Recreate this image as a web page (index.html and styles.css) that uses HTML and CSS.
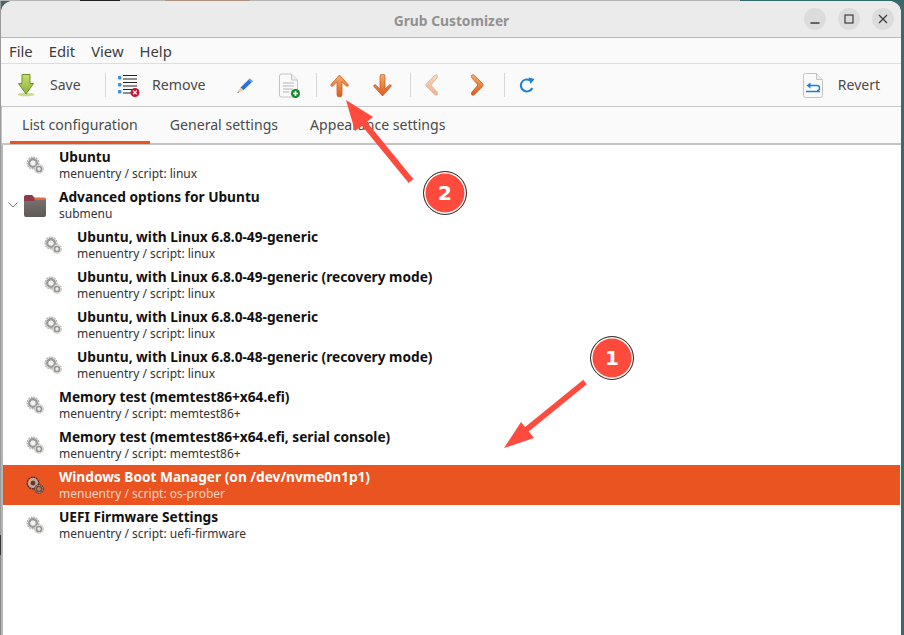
FILE: index.html
```html
<!DOCTYPE html>
<html lang="en">
<head>
<meta charset="utf-8">
<title>Grub Customizer</title>
<link rel="stylesheet" href="styles.css">
</head>
<body>
<svg class="sprite" aria-hidden="true">
  <defs>
    <linearGradient id="orange" x1="0" y1="0" x2="0" y2="1">
      <stop offset="0" stop-color="#f6ae6c"/><stop offset="1" stop-color="#dd5a1c"/>
    </linearGradient>
    <linearGradient id="green" x1="0" y1="0" x2="0" y2="1">
      <stop offset="0" stop-color="#c5dc70"/><stop offset="1" stop-color="#8cb33a"/>
    </linearGradient>
    <linearGradient id="folder" x1="0" y1="0" x2="0" y2="1">
      <stop offset="0" stop-color="#77706c"/><stop offset="1" stop-color="#5f5957"/>
    </linearGradient>
    <symbol id="gears" viewBox="0 0 20 20">
      <circle cx="7" cy="8" r="5.800" fill="none" stroke="#b4b4b1" stroke-width="1.400" stroke-dasharray="2 .7"/>
      <circle cx="7" cy="8" r="3.800" fill="none" stroke="#999996" stroke-width="2.400"/>
      <circle cx="7" cy="8" r="2.200" fill="#f2f2ef"/>
      <circle cx="13" cy="14" r="4.200" fill="#fff" stroke="#b4b4b1" stroke-width="1.100" stroke-dasharray="1.600 .6"/>
      <circle cx="13" cy="14" r="2.500" fill="none" stroke="#939390" stroke-width="1.700"/>
      <circle cx="13" cy="14" r="1.100" fill="#e6e6e3"/>
    </symbol>
    <symbol id="gears-sel" viewBox="0 0 20 20">
      <circle cx="7" cy="8" r="5.800" fill="none" stroke="#4a3028" stroke-width="1.300" stroke-dasharray="2 .7"/>
      <circle cx="7" cy="8" r="3.800" fill="none" stroke="#b9aca6" stroke-width="2.400"/>
      <circle cx="7" cy="8" r="2.200" fill="#5e3a2c"/>
      <circle cx="13" cy="14" r="4.200" fill="#c2a79b" stroke="#4a3028" stroke-width="1.100" stroke-dasharray="1.600 .6"/>
      <circle cx="13" cy="14" r="2.500" fill="none" stroke="#6c4a3c" stroke-width="1.500"/>
      <circle cx="13" cy="14" r="1.100" fill="#e8622e"/>
    </symbol>
  </defs>
</svg>

<div class="window">
  <header class="titlebar">
    <span class="title">Grub Customizer</span>
    <div class="controls">
      <span class="ctl"><svg width="10" height="10" viewBox="0 0 10 10"><path d="M.5 9h9" stroke="#3d3d3d" stroke-width="1.3"/></svg></span>
      <span class="ctl"><svg width="10" height="10" viewBox="0 0 10 10"><rect x="1" y="1" width="8" height="8" fill="none" stroke="#3d3d3d" stroke-width="1.2"/></svg></span>
      <span class="ctl"><svg width="10" height="10" viewBox="0 0 10 10"><path d="M1 1l8 8M9 1l-8 8" stroke="#3d3d3d" stroke-width="1.3"/></svg></span>
    </div>
  </header>

  <nav class="menubar">
    <span class="menu">File</span><span class="menu">Edit</span><span class="menu">View</span><span class="menu">Help</span>
  </nav>

  <div class="toolbar">
    <div class="tool tool-save">
      <svg class="ic" width="18" height="24" viewBox="0 0 18 24">
        <ellipse cx="9" cy="21.5" rx="8.5" ry="1.8" fill="#c9dc8a"/>
        <path d="M5 1.5h8v9h3.5L9 21 1.5 10.5H5z" fill="url(#green)" stroke="#6f8f2a" stroke-width="1"/>
      </svg>
      <span class="label">Save</span>
    </div>
    <span class="sep"></span>
    <div class="tool tool-remove">
      <svg class="ic" width="23" height="24" viewBox="0 0 23 24">
        <g fill="#3b8fdc"><rect x="1" y="3" width="3.4" height="3.4" rx=".8"/><rect x="1" y="10" width="3.4" height="3.4" rx=".8"/><rect x="1" y="17" width="3.4" height="3.4" rx=".8"/></g>
        <path d="M6 2.5h14M6 6h14M6 9.500h14M6 13h14M6 16.500h12M6 20h8" stroke="#222" stroke-width="1.1"/>
        <circle cx="18" cy="19.500" r="4.500" fill="#c8152f"/>
        <path d="M16.200 17.700l3.600 3.600M19.800 17.700l-3.600 3.600" stroke="#fff" stroke-width="1.300"/>
      </svg>
      <span class="label">Remove</span>
    </div>
    <div class="icon-btn">
      <svg width="18" height="18" viewBox="0 0 18 18">
        <path d="M4.500 11.500L13.800 2.500l3 2.800-9.400 9z" fill="#2f6fd6"/>
        <path d="M13.800 2.500l3 2.800-1.300 1.300-3-2.800z" fill="#6ea5ec"/>
        <path d="M4.500 11.500l2.900 2.800L1 17z" fill="#e9c9a0"/>
        <path d="M2.600 15.500L1 17l2.200-.7z" fill="#444"/>
      </svg>
    </div>
    <div class="icon-btn">
      <svg width="22" height="25" viewBox="0 0 22 25">
        <path d="M1.500 3a2 2 0 0 1 2-2h10l6 6v15a2 2 0 0 1-2 2h-14a2 2 0 0 1-2-2z" fill="#fafafa" stroke="#c4c4c4"/>
        <path d="M13.500 1v6h6" fill="#eee" stroke="#c4c4c4"/>
        <path d="M5 10h11M5 13h11M5 16h10M5 19h6" stroke="#b5b5b5" stroke-width="1"/>
        <circle cx="17.500" cy="20.500" r="4.500" fill="#16862f"/>
        <path d="M15 20.500h5M17.500 18v5" stroke="#fff" stroke-width="1.600"/>
      </svg>
    </div>
    <span class="sep"></span>
    <div class="icon-btn">
      <svg width="19" height="23" viewBox="0 0 19 23">
        <path d="M9.500 1L18 10.500c.6.800 0 1.800-1 1.800-.4 0-.8-.2-1-.5L12 7.800V20.500a2 2 0 0 1-5 0V7.800L3 11.800c-.3.300-.6.500-1 .5-1 0-1.600-1-1-1.800z" fill="url(#orange)" stroke="#cf5b1e" stroke-width=".8"/>
      </svg>
    </div>
    <div class="icon-btn icon-down">
      <svg width="19" height="23" viewBox="0 0 19 23">
        <path d="M9.500 22L18 12.500c.6-.8 0-1.800-1-1.800-.4 0-.8.200-1 .5L12 15.200V2.500a2.500 2.500 0 0 0-5 0v12.700L3 11.200c-.3-.3-.6-.5-1-.5-1 0-1.600 1-1 1.800z" fill="url(#orange)" stroke="#cf5b1e" stroke-width=".8"/>
      </svg>
    </div>
    <span class="sep"></span>
    <div class="icon-btn icon-left">
      <svg class="faded" width="13" height="22" viewBox="0 0 13 22">
        <path d="M9.800 1.200L1.500 9.500c-.9.900-.9 2.100 0 3l8.300 8.300c2 1.500 3.800-.8 2.500-2.500L6 11l6.300-7.300c1.300-1.700-.5-4-2.500-2.500z" fill="url(#orange)" stroke="#cf5b1e" stroke-width=".8"/>
      </svg>
    </div>
    <div class="icon-btn">
      <svg width="13" height="22" viewBox="0 0 13 22">
        <path d="M3.200 1.200l8.300 8.300c.9.900.9 2.100 0 3l-8.300 8.300c-2 1.500-3.800-.8-2.500-2.500L7 11 .7 3.700C-.6 2 1.200-.3 3.200 1.200z" fill="url(#orange)" stroke="#cf5b1e" stroke-width=".8"/>
      </svg>
    </div>
    <span class="sep"></span>
    <div class="icon-btn">
      <svg width="16" height="16" viewBox="0 0 16 16">
        <path d="M13.300 11A6 6 0 1 1 11 3.300" fill="none" stroke="#1c7fd8" stroke-width="2"/>
        <path d="M9.500 0.500L15.500 2 11.500 7z" fill="#1c7fd8"/>
      </svg>
    </div>
    <div class="tool tool-revert">
      <svg class="ic" width="20" height="25" viewBox="0 0 20 25">
        <path d="M.5 2.500a2 2 0 0 1 2-2h11l6 6v16a2 2 0 0 1-2 2h-15a2 2 0 0 1-2-2z" fill="#fafafa" stroke="#c4c4c4"/>
        <path d="M13.500.5v6h6" fill="#eee" stroke="#c4c4c4"/>
        <path d="M7 12.500h7a2.600 2.600 0 0 1 0 5.200" fill="none" stroke="#1c7fd8" stroke-width="1.300"/>
        <path d="M7.500 9.500v6L3.500 12.500z" fill="#1c7fd8"/>
        <path d="M3 18.500h14" stroke="#1c7fd8" stroke-width="1.300"/>
      </svg>
      <span class="label">Revert</span>
    </div>
  </div>

  <div class="tabs">
    <span class="tab tab-active">List configuration</span>
    <span class="tab">General settings</span>
    <span class="tab">Appearance settings</span>
  </div>

  <main class="list">
    <div class="row"><svg class="gear"><use href="#gears"/></svg><div class="txt"><div class="name">Ubuntu</div><div class="sub">menuentry / script: linux</div></div></div>
    <div class="row row-folder">
      <svg class="expander" width="10" height="6" viewBox="0 0 10 6"><path d="M.5.500L5 5 9.500.500" fill="none" stroke="#777" stroke-width="1"/></svg>
      <svg class="folder" width="24" height="23" viewBox="0 0 24 23">
        <path d="M1 3a2 2 0 0 1 2-2h6l3 3h9a2 2 0 0 1 2 2v3H1z" fill="#8c3a4c"/>
        <path d="M11 3.500h10a2 2 0 0 1 2 2V7H12z" fill="#d9703a"/>
        <path d="M1 8a1 1 0 0 1 1-1h9l1.500-1H22a1 1 0 0 1 1 1v14a2 2 0 0 1-2 2H3a2 2 0 0 1-2-2z" fill="url(#folder)"/>
      </svg>
      <div class="txt"><div class="name">Advanced options for Ubuntu</div><div class="sub">submenu</div></div>
    </div>
    <div class="row row-child"><svg class="gear"><use href="#gears"/></svg><div class="txt"><div class="name">Ubuntu, with Linux 6.8.0-49-generic</div><div class="sub">menuentry / script: linux</div></div></div>
    <div class="row row-child"><svg class="gear"><use href="#gears"/></svg><div class="txt"><div class="name">Ubuntu, with Linux 6.8.0-49-generic (recovery mode)</div><div class="sub">menuentry / script: linux</div></div></div>
    <div class="row row-child"><svg class="gear"><use href="#gears"/></svg><div class="txt"><div class="name">Ubuntu, with Linux 6.8.0-48-generic</div><div class="sub">menuentry / script: linux</div></div></div>
    <div class="row row-child"><svg class="gear"><use href="#gears"/></svg><div class="txt"><div class="name">Ubuntu, with Linux 6.8.0-48-generic (recovery mode)</div><div class="sub">menuentry / script: linux</div></div></div>
    <div class="row"><svg class="gear"><use href="#gears"/></svg><div class="txt"><div class="name">Memory test (memtest86+x64.efi)</div><div class="sub">menuentry / script: memtest86+</div></div></div>
    <div class="row"><svg class="gear"><use href="#gears"/></svg><div class="txt"><div class="name">Memory test (memtest86+x64.efi, serial console)</div><div class="sub">menuentry / script: memtest86+</div></div></div>
    <div class="row row-selected"><svg class="gear"><use href="#gears-sel"/></svg><div class="txt"><div class="name">Windows Boot Manager (on /dev/nvme0n1p1)</div><div class="sub">menuentry / script: os-prober</div></div></div>
    <div class="row"><svg class="gear"><use href="#gears"/></svg><div class="txt"><div class="name">UEFI Firmware Settings</div><div class="sub">menuentry / script: uefi-firmware</div></div></div>
  </main>
</div>

<svg class="arrows" width="904" height="635" viewBox="0 0 904 635" aria-hidden="true">
  <path d="M411 181L362 121" stroke="#ff4b3e" stroke-width="6"/>
  <path d="M346 100l27 17-18 14z" fill="#ff4b3e"/>
  <path d="M585 382L526 430" stroke="#ff4b3e" stroke-width="5.500"/>
  <path d="M504 448l17-26 13 16z" fill="#ff4b3e"/>
</svg>
<span class="badge badge-one">1</span>
<span class="badge badge-two">2</span>
</body>
</html>
```
FILE: styles.css
```css
* { box-sizing: border-box; }

html, body { margin: 0; height: 100%; }

body {
  height: 635px;
  overflow: hidden;
  position: relative;
  display: flex;
  padding: 1px 3px 0 1px;
  font-family: "Noto Sans", sans-serif;
  background:
    linear-gradient(90deg, #b5b5b5 0 80px, #222 80px 120px, #b5b5b5 120px 165px, #b09080 165px 250px, #b5b5b5 250px 740px, #2f6a6e 740px) top / 100% 1px no-repeat,
    linear-gradient(180deg, #9a9a9a 0 535px, #333 535px 555px, #8a8a8a 555px) left / 1px 100% no-repeat,
    #3c6a6a;
}

.sprite { position: absolute; width: 0; height: 0; }

.window {
  flex: 1;
  min-width: 0;
  display: flex;
  flex-direction: column;
  background: #fafafa;
  border-radius: 12px 12px 0 0;
  overflow: hidden;
}

.titlebar {
  flex: 0 0 37px;
  display: flex;
  align-items: center;
  justify-content: center;
  position: relative;
  background: #ebebeb;
  border-bottom: 1px solid #b8b8b8;
}

.title {
  font-size: 13.8px;
  font-weight: 700;
  color: #919191;
  margin-top: 2px;
  margin-left: 1px;
}

.controls {
  position: absolute;
  right: 7px;
  top: 7px;
  display: flex;
  gap: 12px;
}

.ctl {
  width: 22px;
  height: 22px;
  border-radius: 50%;
  background: #dcdcdc;
  display: flex;
  align-items: center;
  justify-content: center;
}

.menubar {
  flex: 0 0 26px;
  display: flex;
  align-items: center;
  padding-left: 8px;
  gap: 16px;
  font-size: 14.8px;
  color: #3d3d3d;
  border-bottom: 1px solid #dedede;
}

.toolbar {
  flex: 0 0 43px;
  display: flex;
  align-items: center;
  border-bottom: 1px solid #c6c6c6;
  font-size: 14px;
  color: #4a4a4a;
}

.label { margin-bottom: 2px; }

.tool { display: flex; align-items: center; }
.tool-save { width: 99px; padding-left: 16px; gap: 15px; }
.tool-remove { width: 117px; padding-left: 11px; gap: 12px; font-size: 14.2px; }
.tool-revert { margin-left: auto; padding-right: 21px; gap: 15px; }
.tool-revert .ic { margin-left: 0; }

.sep { width: 1px; height: 24px; margin-left: 5px; background: #d6d6d6; }

.icon-btn {
  width: 44px;
  display: flex;
  align-items: center;
  justify-content: center;
}

.icon-down { padding-right: 2px; }
.icon-left { padding-right: 4px; }

.ic { flex: none; }
.faded { opacity: .45; }

.tabs {
  flex: 0 0 38px;
  display: flex;
  gap: 8px;
  padding-left: 8px;
  border-left: 1px solid #c6c6c6;
  border-bottom: 2px solid #c4c4c4;
  font-size: 14.1px;
  color: #4a4a4a;
}

.tab {
  padding: 0 12px;
  display: flex;
  align-items: center;
  border-bottom: 2px solid transparent;
  margin-bottom: -1px;
}

.tab-active { border-bottom: 3px solid #e95420; padding-top: 1px; }

.list {
  flex: 1;
  background: #fff;
  border-left: 2px solid #b5b5b5;
  margin-right: 1px;
  padding-top: 0;
}

.row {
  height: 40px;
  display: flex;
  align-items: center;
  padding-left: 23px;
}

.row-child { padding-left: 41px; }
.row-folder { padding-left: 5px; }

.gear { width: 20px; height: 20px; margin-right: 13px; flex: none; }
.expander { margin-right: 5px; flex: none; }
.folder { margin-right: 12px; flex: none; }

.txt { line-height: 16px; padding-top: 1px; }
.name { font-size: 13.7px; font-weight: 700; color: #111; }
.sub { font-size: 12px; color: #333; margin-top: 1px; }

.row-selected { background: #e95420; }
.row-selected .name { color: #fff; }
.row-selected .sub { color: #f5d5c8; }

.arrows { position: absolute; left: 0; top: 0; pointer-events: none; }

.badge {
  position: absolute;
  width: 44px;
  height: 44px;
  border-radius: 50%;
  background: #ff4b3e;
  border: 1px solid #333;
  box-shadow: inset 0 0 0 1.5px #fff;
  color: #fff;
  font-family: "DejaVu Sans", sans-serif;
  font-weight: 700;
  font-size: 20px;
  display: flex;
  align-items: center;
  justify-content: center;
}

.badge-one { left: 590px; top: 336px; }
.badge-two { left: 423px; top: 171px; }
```
